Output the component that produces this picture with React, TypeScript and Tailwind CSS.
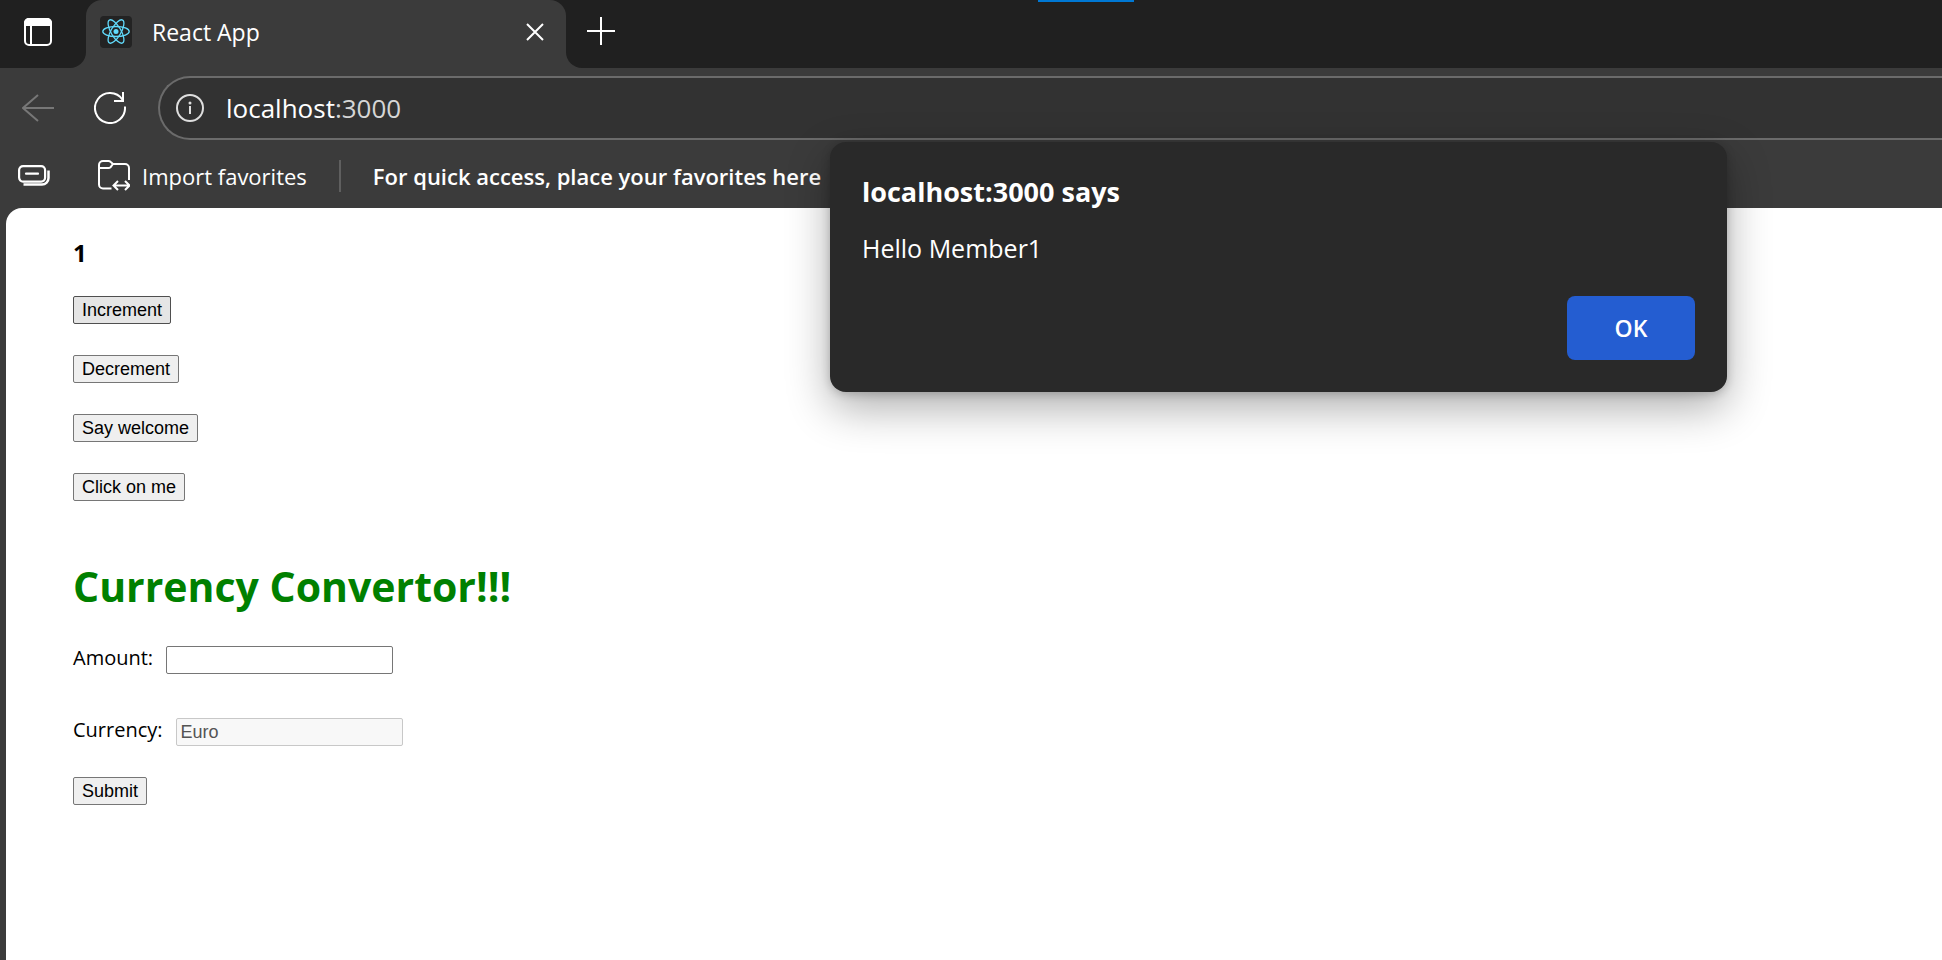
import { useState } from "react";
import type { ReactNode } from "react";

function ReactLogo() {
  return (
    <svg viewBox="0 0 32 32" className="size-8 shrink-0" fill="none" aria-hidden="true">
      <rect width="32" height="32" rx="4" fill="#232323" />
      <g stroke="#61dafb" strokeWidth="1.3">
        <ellipse cx="16" cy="15.5" rx="13.2" ry="5" />
        <ellipse cx="16" cy="15.5" rx="13.2" ry="5" transform="rotate(60 16 15.5)" />
        <ellipse cx="16" cy="15.5" rx="13.2" ry="5" transform="rotate(120 16 15.5)" />
      </g>
      <circle cx="16" cy="15.5" r="2.5" fill="#61dafb" />
    </svg>
  );
}

function TabActionsIcon() {
  return (
    <svg viewBox="0 0 28 28" className="size-7" fill="none" aria-hidden="true">
      <rect x="1" y="1" width="26" height="26" rx="4" stroke="#fff" strokeWidth="2" />
      <path d="M0 8V5a5 5 0 0 1 5-5h18a5 5 0 0 1 5 5v3z" fill="#fff" />
      <path d="M7 8v19" stroke="#fff" strokeWidth="2" />
    </svg>
  );
}

function BackIcon() {
  return (
    <svg viewBox="0 0 32 28" className="h-7 w-8" fill="none" stroke="#777" strokeWidth="2" aria-hidden="true">
      <path d="M32 14H1M16 1 1 14l15 13" />
    </svg>
  );
}

function ReloadIcon() {
  return (
    <svg viewBox="0 0 32 32" className="size-8" fill="none" stroke="#fff" strokeWidth="2" aria-hidden="true">
      <path d="M30.930 14.500A15 15 0 1 1 28.500 7.700" />
      <path d="M29 0v9h-9" />
    </svg>
  );
}

function InfoIcon() {
  return (
    <svg viewBox="0 0 28 28" className="size-7" fill="none" stroke="#dedede" strokeWidth="2" aria-hidden="true">
      <circle cx="14" cy="14" r="13" />
      <path d="M14 12v8" />
      <circle cx="14" cy="9" r="1.5" fill="#dedede" stroke="none" />
    </svg>
  );
}

function TabGroupsIcon() {
  return (
    <svg viewBox="0 0 32 22" className="h-[22px] w-8" fill="none" stroke="#fff" strokeWidth="2.200" aria-hidden="true">
      <rect x="1.100" y="1.100" width="26" height="15.500" rx="4" />
      <path d="M8 8.700h12" strokeLinecap="round" />
      <path d="M5.500 19.500H24a6.500 6.500 0 0 0 6.500-6.500V5.500" strokeWidth="2.500" />
    </svg>
  );
}

function ImportFolderIcon() {
  return (
    <svg viewBox="0 0 32 32" className="size-8" fill="none" stroke="#fff" strokeWidth="2" aria-hidden="true">
      <path d="M13.500 28.500H5a4 4 0 0 1-4-4V5a4 4 0 0 1 4-4h5.500a3 3 0 0 1 2 .8L15 4h12a4 4 0 0 1 4 4v12" />
      <path d="M1 8h9.500a3 3 0 0 0 2-.8L15 4" />
      <path d="M15.500 25.500h16M20 21 15.500 25.500 20 30M27 21l4.500 4.500L27 30" />
    </svg>
  );
}

function PageButton({
  children,
  active = false,
  onClick,
}: {
  children: ReactNode;
  active?: boolean;
  onClick?: () => void;
}) {
  const tone = active ? "border-[#4f4f4f] bg-[#e5e5e5]" : "border-[#767676] bg-[#efefef]";
  return (
    <button
      type="button"
      onClick={onClick}
      className={`h-7 rounded-[2px] border px-2 font-['Liberation_Sans',Arial,sans-serif] text-[18px] leading-6 text-black ${tone}`}
    >
      {children}
    </button>
  );
}

function TabStrip() {
  return (
    <div className="flex h-[68px] items-end bg-[#3b3b3b]">
      <div className="flex h-full w-[86px] shrink-0 items-start rounded-br-2xl bg-[#202020] pt-[18px] pl-6">
        <button type="button" aria-label="Tab actions menu">
          <TabActionsIcon />
        </button>
      </div>
      <div className="h-full w-[480px] shrink-0 bg-[#202020]">
        <div className="flex h-full items-start rounded-t-2xl bg-[#3b3b3b] pr-[22px] pl-[14px]">
          <div className="flex h-16 flex-1 items-center gap-5">
            <ReactLogo />
            <span className="flex-1 text-[23px] leading-8 text-white">React App</span>
            <button type="button" aria-label="Close tab">
              <svg viewBox="0 0 18 18" className="size-[18px]" stroke="#fff" strokeWidth="2" aria-hidden="true">
                <path d="M1 1l16 16M17 1 1 17" />
              </svg>
            </button>
          </div>
        </div>
      </div>
      <div className="flex h-full flex-1 items-start rounded-bl-2xl bg-[#202020] pt-[17px] pl-[21px]">
        <button type="button" aria-label="New tab">
          <svg viewBox="0 0 28 28" className="size-7" stroke="#fff" strokeWidth="2" aria-hidden="true">
            <path d="M14 0v28M0 14h28" />
          </svg>
        </button>
      </div>
    </div>
  );
}

function Toolbar() {
  return (
    <div className="flex h-[72px] items-end">
      <div className="flex h-16 w-[158px] shrink-0 items-center gap-10 pl-[22px]">
        <button type="button" aria-label="Back" disabled>
          <BackIcon />
        </button>
        <button type="button" aria-label="Reload">
          <ReloadIcon />
        </button>
      </div>
      <div className="flex h-16 flex-1 items-center gap-[22px] rounded-l-full border-2 border-r-0 border-[#6b6b6b] bg-[#323232] pl-4">
        <button type="button" aria-label="View site information">
          <InfoIcon />
        </button>
        <a href="http://localhost:3000" className="text-[26px] leading-8 text-white">
          localhost<span className="text-[#d6d6d6]">:3000</span>
        </a>
      </div>
    </div>
  );
}

function FavoritesBar() {
  return (
    <div className="flex h-[68px] items-center pt-1 pl-[18px] text-[22px] leading-8 whitespace-nowrap text-white">
      <button type="button" aria-label="Tab groups">
        <TabGroupsIcon />
      </button>
      <button type="button" className="ml-12 flex items-center gap-3">
        <ImportFolderIcon />
        Import favorites
      </button>
      <div className="ml-8 h-8 w-[2px] bg-[#5f5f5f]" />
      <p className="ml-8 font-semibold">For quick access, place your favorites here</p>
    </div>
  );
}

function AlertDialog({ onClose }: { onClose: () => void }) {
  return (
    <div
      role="alertdialog"
      aria-labelledby="alert-title"
      aria-describedby="alert-body"
      className="absolute top-[142px] right-[215px] flex w-[897px] flex-col rounded-2xl bg-[#292929] p-8 text-white shadow-[0_16px_44px_rgba(0,0,0,0.32),0_2px_10px_rgba(0,0,0,0.2)]"
    >
      <h2 id="alert-title" className="text-[27px] leading-9 font-bold">
        localhost:3000 says
      </h2>
      <p id="alert-body" className="mt-5 text-[25px] leading-9">
        Hello Member1
      </p>
      <button
        type="button"
        onClick={onClose}
        className="mt-[30px] h-16 w-32 self-end rounded-lg bg-[#245dd1] text-[23px] leading-8 font-semibold"
      >
        OK
      </button>
    </div>
  );
}

const FIELD =
  "h-7 w-[227px] rounded-[2px] border px-1 font-['Liberation_Sans',Arial,sans-serif] text-[18px] leading-6";

export default function App() {
  const [count, setCount] = useState(1);
  const [message, setMessage] = useState(true);
  const [amount, setAmount] = useState("");

  return (
    <div className="relative flex min-h-screen flex-col overflow-hidden bg-[#3b3b3b] font-['Open_Sans','Noto_Sans',sans-serif]">
      <TabStrip />
      <Toolbar />
      <FavoritesBar />
      <main className="ml-[6px] flex-1 rounded-tl-2xl bg-white pt-[27px] pl-[67px] text-black">
        <h3 className="text-[24px] leading-9 font-bold">{count}</h3>
        <div className="mt-[25px] flex flex-col items-start gap-[31px]">
          <PageButton
            active
            onClick={() => {
              setCount(count + 1);
              setMessage(true);
            }}
          >
            Increment
          </PageButton>
          <PageButton onClick={() => setCount(count - 1)}>Decrement</PageButton>
          <PageButton>Say welcome</PageButton>
          <PageButton>Click on me</PageButton>
        </div>
        <h1 className="mt-[57px] text-[41px] leading-[56px] font-bold text-[#008000]">Currency Convertor!!!</h1>
        <form className="mt-8 flex flex-col items-start" onSubmit={(event) => event.preventDefault()}>
          <div className="flex items-start gap-[13px]">
            <label htmlFor="amount" className="text-[20px] leading-6">
              Amount:
            </label>
            <input
              id="amount"
              value={amount}
              onChange={(event) => setAmount(event.target.value)}
              className={`${FIELD} border-[#767676] bg-white`}
            />
          </div>
          <div className="mt-11 flex items-start gap-[13px]">
            <label htmlFor="currency" className="text-[20px] leading-6">
              Currency:
            </label>
            <input
              id="currency"
              value="Euro"
              disabled
              readOnly
              className={`${FIELD} border-[#c8c8c8] bg-[#f8f8f8] text-[#545454]`}
            />
          </div>
          <div className="mt-[31px] flex">
            <PageButton>Submit</PageButton>
          </div>
        </form>
      </main>
      <div className="absolute top-0 left-[1038px] h-[2px] w-24 bg-[#0078d4]" />
      {message && <AlertDialog onClose={() => setMessage(false)} />}
    </div>
  );
}
